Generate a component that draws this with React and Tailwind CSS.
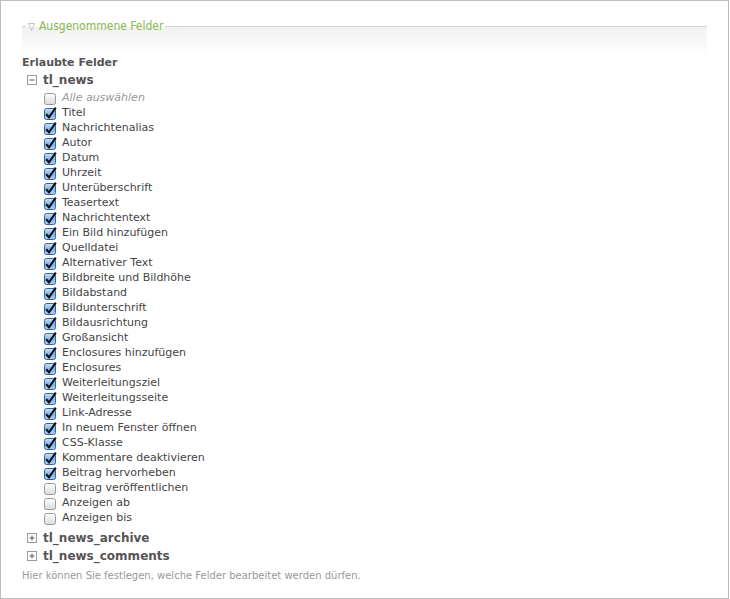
import React from 'react';

const fields = [
    { label: 'Titel', checked: true },
    { label: 'Nachrichtenalias', checked: true },
    { label: 'Autor', checked: true },
    { label: 'Datum', checked: true },
    { label: 'Uhrzeit', checked: true },
    { label: 'Unterüberschrift', checked: true },
    { label: 'Teasertext', checked: true },
    { label: 'Nachrichtentext', checked: true },
    { label: 'Ein Bild hinzufügen', checked: true },
    { label: 'Quelldatei', checked: true },
    { label: 'Alternativer Text', checked: true },
    { label: 'Bildbreite und Bildhöhe', checked: true },
    { label: 'Bildabstand', checked: true },
    { label: 'Bildunterschrift', checked: true },
    { label: 'Bildausrichtung', checked: true },
    { label: 'Großansicht', checked: true },
    { label: 'Enclosures hinzufügen', checked: true },
    { label: 'Enclosures', checked: true },
    { label: 'Weiterleitungsziel', checked: true },
    { label: 'Weiterleitungsseite', checked: true },
    { label: 'Link-Adresse', checked: true },
    { label: 'In neuem Fenster öffnen', checked: true },
    { label: 'CSS-Klasse', checked: true },
    { label: 'Kommentare deaktivieren', checked: true },
    { label: 'Beitrag hervorheben', checked: true },
    { label: 'Beitrag veröffentlichen', checked: false },
    { label: 'Anzeigen ab', checked: false },
    { label: 'Anzeigen bis', checked: false },
];

const Checkbox = ({ checked }) => (
    <svg width="14" height="14" viewBox="0 0 14 14" className="shrink-0">
        <defs>
            <linearGradient id="cbOff" x1="0" y1="0" x2="0" y2="1">
                <stop offset="0" stopColor="#ffffff" />
                <stop offset="1" stopColor="#d9d9d9" />
            </linearGradient>
            <linearGradient id="cbOn" x1="0" y1="0" x2="0" y2="1">
                <stop offset="0" stopColor="#cfe4fa" />
                <stop offset="0.5" stopColor="#7fb5ee" />
                <stop offset="1" stopColor="#a9d0f7" />
            </linearGradient>
        </defs>
        <rect
            x="1.5" y="1.5" width="11" height="11" rx="2"
            fill={checked ? 'url(#cbOn)' : 'url(#cbOff)'}
            stroke={checked ? '#34649f' : '#9a9a9a'}
        />
        {checked && (
            <path d="M3.2 7.2 L6 10.4 L12.8 0.6" fill="none" stroke="#111" strokeWidth="2.1" strokeLinejoin="miter" />
        )}
    </svg>
);

const Toggle = ({ open }) => (
    <svg width="10" height="10" viewBox="0 0 10 10" className="shrink-0">
        <rect x="0.5" y="0.5" width="9" height="9" fill="#fff" stroke="#9c9c9c" />
        <path d="M2.5 5 H7.5" stroke="#555" />
        {!open && <path d="M5 2.5 V7.5" stroke="#555" />}
    </svg>
);

export default function App() {
    return (
        <div className="w-[729px] h-[599px] border border-[#bdbdbd] bg-white text-[11px] text-[#444] font-['DejaVu_Sans',Verdana,sans-serif]">
            <fieldset className="mx-[21px] mt-[16px] border-t border-[#d4d4d4] h-[38px] bg-linear-to-b from-[#f1f1f1] to-white">
                <legend className="ml-[4px] px-[2px] flex items-center text-[12px] text-[#8ab84f] font-['DejaVu_Sans_Condensed','DejaVu_Sans',sans-serif]">
                    <span className="text-[#999] text-[10px] mr-[4px]">▽</span>
                    Ausgenommene Felder
                </legend>
            </fieldset>

            <div className="px-[21px]">
                <div className="h-[15px] leading-[15px] font-bold text-[11px] text-[#555]">Erlaubte Felder</div>

                <div className="mt-[2px] ml-[5px] h-[15px] flex items-center gap-[6px]">
                    <Toggle open />
                    <span className="font-bold text-[12px] text-[#555]">tl_news</span>
                </div>

                <ul className="mt-[4px] ml-[21px]">
                    <li className="h-[15px] flex items-center gap-[5px]">
                        <Checkbox checked={false} />
                        <span className="italic text-[#999]">Alle auswählen</span>
                    </li>
                    {fields.map(f => (
                        <li key={f.label} className="h-[15px] flex items-center gap-[5px]">
                            <Checkbox checked={f.checked} />
                            <span>{f.label}</span>
                        </li>
                    ))}
                </ul>

                <div className="mt-[4px] ml-[5px] h-[15px] flex items-center gap-[6px]">
                    <Toggle open={false} />
                    <span className="font-bold text-[12px] text-[#555]">tl_news_archive</span>
                </div>
                <div className="mt-[3px] ml-[5px] h-[15px] flex items-center gap-[6px]">
                    <Toggle open={false} />
                    <span className="font-bold text-[12px] text-[#555]">tl_news_comments</span>
                </div>

                <p className="mt-[5px] h-[15px] leading-[15px] text-[10px] text-[#999]">
                    Hier können Sie festlegen, welche Felder bearbeitet werden dürfen.
                </p>
            </div>
        </div>
    );
}
